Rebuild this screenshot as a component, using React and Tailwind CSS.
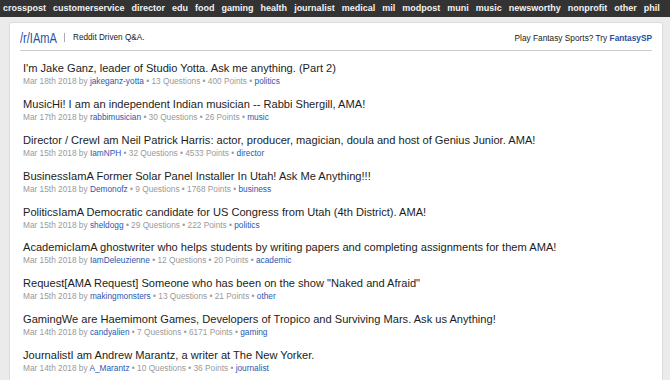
import React from "react";

const tags = [
  "crosspost",
  "customerservice",
  "director",
  "edu",
  "food",
  "gaming",
  "health",
  "journalist",
  "medical",
  "mil",
  "modpost",
  "muni",
  "music",
  "newsworthy",
  "nonprofit",
  "other",
  "phil",
];

const posts = [
  {
    title: "I'm Jake Ganz, leader of Studio Yotta. Ask me anything. (Part 2)",
    date: "Mar 18th 2018",
    user: "jakeganz-yotta",
    questions: 13,
    points: 400,
    tag: "politics",
  },
  {
    title: "MusicHi! I am an independent Indian musician -- Rabbi Shergill, AMA!",
    date: "Mar 17th 2018",
    user: "rabbimusician",
    questions: 30,
    points: 26,
    tag: "music",
  },
  {
    title:
      "Director / CrewI am Neil Patrick Harris: actor, producer, magician, doula and host of Genius Junior. AMA!",
    date: "Mar 15th 2018",
    user: "IamNPH",
    questions: 32,
    points: 4533,
    tag: "director",
  },
  {
    title: "BusinessIamA Former Solar Panel Installer In Utah! Ask Me Anything!!!",
    date: "Mar 15th 2018",
    user: "Demonofz",
    questions: 9,
    points: 1768,
    tag: "business",
  },
  {
    title: "PoliticsIamA Democratic candidate for US Congress from Utah (4th District). AMA!",
    date: "Mar 15th 2018",
    user: "sheldogg",
    questions: 29,
    points: 222,
    tag: "politics",
  },
  {
    title:
      "AcademicIamA ghostwriter who helps students by writing papers and completing assignments for them AMA!",
    date: "Mar 15th 2018",
    user: "IamDeleuzienne",
    questions: 12,
    points: 20,
    tag: "academic",
  },
  {
    title: 'Request[AMA Request] Someone who has been on the show "Naked and Afraid"',
    date: "Mar 15th 2018",
    user: "makingmonsters",
    questions: 13,
    points: 21,
    tag: "other",
  },
  {
    title:
      "GamingWe are Haemimont Games, Developers of Tropico and Surviving Mars. Ask us Anything!",
    date: "Mar 14th 2018",
    user: "candyalien",
    questions: 7,
    points: 6171,
    tag: "gaming",
  },
  {
    title: "JournalistI am Andrew Marantz, a writer at The New Yorker.",
    date: "Mar 14th 2018",
    user: "A_Marantz",
    questions: 10,
    points: 36,
    tag: "journalist",
  },
];

export default function App() {
  return (
    <div
      className="h-[380px] w-[670px] overflow-hidden bg-[#ebebeb]"
      style={{ fontFamily: '"Liberation Sans", Arial, sans-serif' }}
    >
      <div className="flex h-[17px] items-center gap-[7px] overflow-hidden whitespace-nowrap bg-[#333333] pl-[3px] text-[9px] font-bold text-[#f2f2f2]">
        {tags.map((t) => (
          <span key={t}>{t}</span>
        ))}
      </div>

      <div className="ml-[9px] mr-[7px] mt-[5px] h-[400px] rounded-t-[3px] border border-[#dcdcdc] bg-white px-[10px]">
        <div className="flex h-[28px] items-center justify-between border-b border-[#cccccc] pt-[2px]">
          <div className="flex items-center">
            <div className="flex h-[16px] w-[37px] items-center whitespace-nowrap text-[14px] leading-[16px]">
              <span className="inline-block origin-left scale-x-[0.79] text-[#1f4e9e]">/r/IAmA</span>
            </div>
            <span className="ml-[7px] mr-[8px] h-[9px] w-px bg-[#aaaaaa]" />
            <span className="text-[8.2px] leading-[10px] text-[#222222]">Reddit Driven Q&amp;A.</span>
          </div>
          <div className="text-[8.3px] leading-[10px] text-[#222222]">
            Play Fantasy Sports? Try{" "}
            <span className="font-bold text-[#1f4e9e]">FantasySP</span>
          </div>
        </div>

        <div className="flex flex-col px-[3px] pt-[9px]">
          {posts.map((p, i) => (
            <div key={i} className="flex h-[35.9px] flex-col">
              <div className="whitespace-nowrap text-[11.1px] leading-[16px] text-[#1c1c1c]">
                {p.title}
              </div>
              <div className="whitespace-nowrap text-[8.3px] leading-[11px] text-[#9a9a9a]">
                {p.date} by <span className="text-[#2b57b0]">{p.user}</span> • {p.questions}{" "}
                Questions • {p.points} Points • <span className="text-[#2b57b0]">{p.tag}</span>
              </div>
            </div>
          ))}
        </div>
      </div>
    </div>
  );
}
